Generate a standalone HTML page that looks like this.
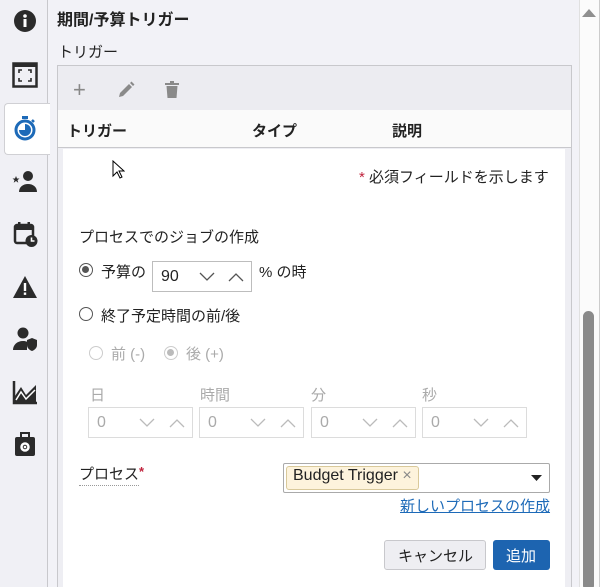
<!DOCTYPE html>
<html><head><meta charset="utf-8"><style>
*{box-sizing:border-box;margin:0;padding:0}
html,body{width:600px;height:587px;overflow:hidden}
body{background:#f2f2f7;font-family:"Liberation Sans","Noto Sans CJK JP",sans-serif;color:#222;position:relative;font-size:15px}
.abs{position:absolute}
.side{left:0;top:0;width:48px;height:587px;background:#f0f0f5;border-right:1px solid #c8c8cc}
.tabsel{left:4px;top:103px;width:46px;height:52px;background:#fff;border:1px solid #d0d0d4;border-right:none;border-radius:4px 0 0 4px}
.ic{position:absolute;left:12px;width:26px;height:26px}
.t{position:absolute;white-space:nowrap}
.inp{position:absolute;height:31px;border:1px solid #bdbdbd;background:#fff}
.inp.dis{border-color:#dcdcdc}
.inp .v{position:absolute;left:8px;top:6px;font-size:16px}
.chev{position:absolute;top:10px;width:16px;height:10px}
.radio{position:absolute;width:14px;height:14px;border:1.5px solid #555;border-radius:50%;background:#fff}
.radio.on::after{content:"";position:absolute;left:2px;top:2px;width:7px;height:7px;border-radius:50%;background:#555}
.radio.g{border-color:#ccc}
.radio.on.g::after{background:#bbb}
</style></head><body>
<div class="abs side"></div>
<div class="abs tabsel"></div>
<svg class="ic" style="top:8px" viewBox="0 0 26 26"><circle cx="13" cy="13" r="11" fill="#2b2b2b"/><rect x="11.5" y="11" width="3" height="8" fill="#fff"/><circle cx="13" cy="8" r="1.8" fill="#fff"/></svg>
<svg class="ic" style="top:62px" viewBox="0 0 26 26"><rect x="1.5" y="1.5" width="23" height="23" fill="none" stroke="#2b2b2b" stroke-width="2.5"/><rect x="2" y="2" width="22" height="3" fill="#2b2b2b"/><path d="M7 11V8h3M16 8h3v3M19 16v3h-3M10 19H7v-3" fill="none" stroke="#2b2b2b" stroke-width="1.6"/></svg>
<svg class="ic" style="top:115px" viewBox="0 0 26 26"><rect x="10" y="1" width="6" height="3" fill="#1d6ab8"/><circle cx="13" cy="15" r="9" fill="none" stroke="#1d6ab8" stroke-width="3"/><path d="M13 15V9A6 6 0 1 1 7 15Z" fill="#1d6ab8"/><path d="M20 5l2 2" stroke="#1d6ab8" stroke-width="2.5"/></svg>
<svg class="ic" style="top:168px" viewBox="0 0 26 26"><path d="M4 8l1 2.5h2.5l-2 1.6.8 2.6L4 13l-2.3 1.7.8-2.6-2-1.6H3z" fill="#2b2b2b"/><circle cx="16" cy="8" r="5" fill="#2b2b2b"/><path d="M7 24c0-5 4-8 9-8s9 3 9 8z" fill="#2b2b2b"/></svg>
<svg class="ic" style="top:221px" viewBox="0 0 26 26"><rect x="3" y="4" width="18" height="18" rx="2" fill="none" stroke="#2b2b2b" stroke-width="2.5"/><rect x="3" y="4" width="18" height="5" fill="#2b2b2b"/><rect x="6" y="1" width="2.5" height="5" fill="#2b2b2b"/><rect x="15.5" y="1" width="2.5" height="5" fill="#2b2b2b"/><circle cx="19.5" cy="20" r="6" fill="#2b2b2b"/><path d="M19.5 16.5V20h3" stroke="#fff" stroke-width="1.6" fill="none"/></svg>
<svg class="ic" style="top:274px" viewBox="0 0 26 26"><path d="M13 2L25 24H1z" fill="#2b2b2b"/><rect x="11.8" y="9" width="2.4" height="8" fill="#fff"/><rect x="11.8" y="18.5" width="2.4" height="2.4" fill="#fff"/></svg>
<svg class="ic" style="top:326px" viewBox="0 0 26 26"><circle cx="11" cy="7" r="5.5" fill="#2b2b2b"/><path d="M1 24c0-5 4-9 10-9 2 0 3 .3 4 .8V24z" fill="#2b2b2b"/><path d="M15 14l5-2 5 2v5c0 3-2.5 5-5 6-2.5-1-5-3-5-6z" fill="#2b2b2b"/></svg>
<svg class="ic" style="top:379px" viewBox="0 0 26 26"><path d="M2 2v22h23" fill="none" stroke="#2b2b2b" stroke-width="2.5"/><path d="M3 23V17l6-9 5 8 10-10v17z" fill="#2b2b2b"/><path d="M4 21l5-8 5 7 9-9" fill="none" stroke="#fff" stroke-width="1.5"/></svg>
<svg class="ic" style="top:432px" viewBox="0 0 26 26"><rect x="3" y="5" width="20" height="19" rx="2" fill="#2b2b2b"/><rect x="9" y="1" width="8" height="5" fill="none" stroke="#2b2b2b" stroke-width="2"/><circle cx="13" cy="15" r="3.5" fill="none" stroke="#fff" stroke-width="2.5"/><circle cx="13" cy="15" r="1.3" fill="#fff"/></svg>

<div class="t" style="left:57px;top:6px;font-size:16px;font-weight:bold">期間/予算トリガー</div>
<div class="t" style="left:58px;top:41px;font-size:15px">トリガー</div>

<div class="abs" style="left:57px;top:65px;width:515px;height:530px;border:1px solid #c8c8cc;background:#eeeef3"></div>
<div class="abs" style="left:58px;top:66px;width:513px;height:44px;background:#ececf1"></div>
<div class="t" style="left:73px;top:77px;font-size:22px;color:#888;font-weight:300">+</div>
<svg class="abs" style="left:118px;top:81px" width="17" height="17" viewBox="0 0 17 17"><path d="M1 16l1-4 9-9 3 3-9 9z M12 2l1.5-1.5 3 3L15 5z" fill="#8a8a8a"/></svg>
<svg class="abs" style="left:165px;top:81px" width="14" height="17" viewBox="0 0 14 17"><rect x="0" y="2" width="14" height="2" fill="#8a8a8a"/><rect x="5" y="0" width="4" height="2" fill="#8a8a8a"/><path d="M1.5 5h11l-1 12h-9z" fill="#8a8a8a"/></svg>
<div class="abs" style="left:58px;top:110px;width:513px;height:38px;background:#fafafa;border-bottom:1px solid #c8c8cc"></div>
<div class="t" style="left:67px;top:120px;font-weight:bold;font-size:15px">トリガー</div>
<div class="t" style="left:252px;top:120px;font-weight:bold;font-size:15px">タイプ</div>
<div class="t" style="left:392px;top:120px;font-weight:bold;font-size:15px">説明</div>
<div class="abs" style="left:63px;top:149px;width:502px;height:440px;background:#fff"></div>
<svg class="abs" style="left:112px;top:160px" width="13" height="19" viewBox="0 0 13 19"><path d="M1 1v15l4-4 3 6 2-1-3-6h5z" fill="#fff" stroke="#000" stroke-width="1"/></svg>

<div class="t" style="left:359px;top:166px;font-size:15px"><span style="color:#c0233d">*</span> 必須フィールドを示します</div>
<div class="t" style="left:79px;top:226px">プロセスでのジョブの作成</div>

<div class="radio on" style="left:79px;top:263px"></div>
<div class="t" style="left:101px;top:261px">予算の</div>
<div class="inp" style="left:152px;top:261px;width:100px"><span class="v" style="color:#222">90</span>
<svg class="chev" style="left:46px" viewBox="0 0 16 10"><path d="M1 1l7 7 7-7" fill="none" stroke="#555" stroke-width="1.3"/></svg>
<svg class="chev" style="left:75px" viewBox="0 0 16 10"><path d="M1 9l7-7 7 7" fill="none" stroke="#555" stroke-width="1.3"/></svg></div>
<div class="t" style="left:259px;top:261px">% の時</div>

<div class="radio" style="left:79px;top:307px"></div>
<div class="t" style="left:101px;top:305px">終了予定時間の前/後</div>

<div class="radio g" style="left:89px;top:346px"></div>
<div class="t" style="left:111px;top:343px;color:#aaa">前 (-)</div>
<div class="radio on g" style="left:164px;top:346px"></div>
<div class="t" style="left:186px;top:343px;color:#aaa">後 (+)</div>

<div class="t" style="left:90px;top:384px;color:#aaa">日</div>
<div class="t" style="left:200px;top:384px;color:#aaa">時間</div>
<div class="t" style="left:311px;top:384px;color:#aaa">分</div>
<div class="t" style="left:422px;top:384px;color:#aaa">秒</div>
<div class="inp dis" style="left:88px;top:407px;width:105px"><span class="v" style="color:#aaa">0</span><svg class="chev" style="left:50px" viewBox="0 0 16 10"><path d="M1 1l7 7 7-7" fill="none" stroke="#bbb" stroke-width="1.3"/></svg><svg class="chev" style="left:80px" viewBox="0 0 16 10"><path d="M1 9l7-7 7 7" fill="none" stroke="#bbb" stroke-width="1.3"/></svg></div>
<div class="inp dis" style="left:199px;top:407px;width:105px"><span class="v" style="color:#aaa">0</span><svg class="chev" style="left:50px" viewBox="0 0 16 10"><path d="M1 1l7 7 7-7" fill="none" stroke="#bbb" stroke-width="1.3"/></svg><svg class="chev" style="left:80px" viewBox="0 0 16 10"><path d="M1 9l7-7 7 7" fill="none" stroke="#bbb" stroke-width="1.3"/></svg></div>
<div class="inp dis" style="left:311px;top:407px;width:105px"><span class="v" style="color:#aaa">0</span><svg class="chev" style="left:50px" viewBox="0 0 16 10"><path d="M1 1l7 7 7-7" fill="none" stroke="#bbb" stroke-width="1.3"/></svg><svg class="chev" style="left:80px" viewBox="0 0 16 10"><path d="M1 9l7-7 7 7" fill="none" stroke="#bbb" stroke-width="1.3"/></svg></div>
<div class="inp dis" style="left:422px;top:407px;width:105px"><span class="v" style="color:#aaa">0</span><svg class="chev" style="left:50px" viewBox="0 0 16 10"><path d="M1 1l7 7 7-7" fill="none" stroke="#bbb" stroke-width="1.3"/></svg><svg class="chev" style="left:80px" viewBox="0 0 16 10"><path d="M1 9l7-7 7 7" fill="none" stroke="#bbb" stroke-width="1.3"/></svg></div>

<div class="t" style="left:79px;top:465px;border-bottom:1px dotted #999;line-height:20px">プロセス</div>
<div class="t" style="left:139px;top:464px;color:#c0233d;font-size:13px;font-weight:bold">*</div>
<div class="abs" style="left:283px;top:463px;width:267px;height:30px;border:1px solid #aaa;border-radius:2px;background:#fff"></div>
<div class="abs" style="left:286px;top:466px;width:133px;height:24px;border:1px solid #d9c99a;border-radius:3px;background:#fdf3dc"></div>
<div class="t" style="left:293px;top:467px;font-size:16px;color:#222">Budget Trigger <span style="color:#888">×</span></div>
<svg class="abs" style="left:531px;top:475px" width="11" height="6" viewBox="0 0 11 6"><path d="M0 0h11L5.5 6z" fill="#222"/></svg>
<div class="t" style="left:400px;top:495px;color:#1d6ab8;text-decoration:underline">新しいプロセスの作成</div>

<div class="abs" style="left:384px;top:540px;width:102px;height:30px;border:1px solid #c8c8cc;border-radius:3px;background:#eeeef2"></div>
<div class="t" style="left:398px;top:545px">キャンセル</div>
<div class="abs" style="left:493px;top:540px;width:57px;height:30px;border-radius:3px;background:#1d64b0"></div>
<div class="t" style="left:506px;top:545px;color:#fff">追加</div>

<div class="abs" style="left:579px;top:0;width:21px;height:587px;background:#fbfbfb;border-left:1px solid #e0e0e0;border-right:1px solid #ccc"></div>
<svg class="abs" style="left:582px;top:9px" width="14" height="8" viewBox="0 0 14 8"><path d="M0 8L7 0l7 8z" fill="#8f8f8f"/></svg>
<div class="abs" style="left:583px;top:311px;width:11px;height:280px;border-radius:6px;background:#8a8a8a"></div>
</body></html>
